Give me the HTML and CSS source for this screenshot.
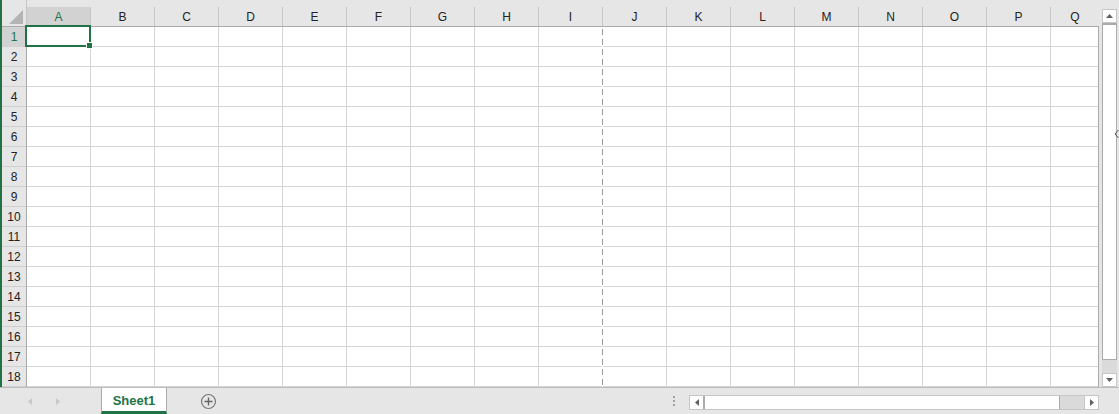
FILE: index.html
```html
<!DOCTYPE html>
<html>
<head>
<meta charset="utf-8">
<link rel="stylesheet" href="styles.css">
</head>
<body>
<div class="workbook">
  <div class="main">
    <div class="sheet">
      <div class="corner">
        <svg class="corner-tri" width="25" height="26" viewBox="0 0 25 26"><polygon points="22,10 22,24 8,24" fill="#b4b4b4"/></svg>
      </div>
      <div class="colheads">
        <div class="ch sel">A</div><div class="ch">B</div><div class="ch">C</div><div class="ch">D</div>
        <div class="ch">E</div><div class="ch">F</div><div class="ch">G</div><div class="ch">H</div>
        <div class="ch">I</div><div class="ch">J</div><div class="ch">K</div><div class="ch">L</div>
        <div class="ch">M</div><div class="ch">N</div><div class="ch">O</div><div class="ch">P</div>
        <div class="ch last">Q</div>
      </div>
      <div class="rowheads">
        <div class="rh sel">1</div><div class="rh">2</div><div class="rh">3</div><div class="rh">4</div>
        <div class="rh">5</div><div class="rh">6</div><div class="rh">7</div><div class="rh">8</div>
        <div class="rh">9</div><div class="rh">10</div><div class="rh">11</div><div class="rh">12</div>
        <div class="rh">13</div><div class="rh">14</div><div class="rh">15</div><div class="rh">16</div>
        <div class="rh">17</div><div class="rh">18</div>
      </div>
      <div class="cells">
        <div class="pagebreak"></div>
        <div class="selection"><div class="handle"></div></div>
      </div>
    </div>
    <div class="vscroll">
      <div class="sb-btn up"><svg width="7" height="4" viewBox="0 0 7 4"><polygon points="3.5,0 7,4 0,4" fill="#606060"/></svg></div>
      <div class="thumb"></div>
      <div class="track"></div>
      <div class="sb-btn down"><svg width="7" height="4" viewBox="0 0 7 4"><polygon points="0,0 7,0 3.5,4" fill="#606060"/></svg></div>
    </div>
  </div>
  <div class="tabbar">
    <div class="nav">
      <svg width="4" height="7" viewBox="0 0 4 7"><polygon points="4,0 4,7 0,3.5" fill="#c8c8c8"/></svg>
      <svg width="4" height="7" viewBox="0 0 4 7"><polygon points="0,0 4,3.5 0,7" fill="#c8c8c8"/></svg>
    </div>
    <div class="tab">Sheet1</div>
    <div class="add">
      <svg width="17" height="17" viewBox="0 0 17 17"><circle cx="8.5" cy="8.5" r="7" fill="none" stroke="#777" stroke-width="1.2"/><path d="M8.5 4.5v8M4.5 8.5h8" stroke="#666" stroke-width="1.4"/></svg>
    </div>
    <div class="spacer"></div>
    <div class="dots"><span></span><span></span><span></span></div>
    <div class="hscroll">
      <div class="hbtn"><svg width="4" height="7" viewBox="0 0 4 7"><polygon points="4,0 4,7 0,3.5" fill="#606060"/></svg></div>
      <div class="hthumb"></div>
      <div class="htrack"></div>
      <div class="hbtn"><svg width="4" height="7" viewBox="0 0 4 7"><polygon points="0,0 4,3.5 0,7" fill="#606060"/></svg></div>
    </div>
  </div>
</div>
<svg class="collapse" width="5" height="10" viewBox="0 0 5 10"><path d="M4.5 1 L1 5 L4.5 9" fill="none" stroke="#555" stroke-width="1"/></svg>
</body>
</html>
```
FILE: styles.css
```css
* { box-sizing: border-box; }
html, body { margin: 0; padding: 0; }
body {
  width: 1119px;
  height: 414px;
  overflow: hidden;
  background: #e6e6e6;
  font-family: "Liberation Sans", Arial, sans-serif;
  position: relative;
}
.workbook { display: flex; flex-direction: column; height: 414px; }
.main { display: flex; height: 387px; }

.sheet {
  display: grid;
  grid-template-columns: 25px 1072px;
  grid-template-rows: 27px 360px;
  border-left: 2px solid #217346;
  width: 1099px;
}
.corner {
  border-right: 1px solid #c6c6c6;
  border-bottom: 1px solid #ababab;
  position: relative;
}
.corner-tri { display: block; margin-left: -1px; }

.colheads {
  display: flex;
  padding-top: 7px;
  border-bottom: 1px solid #ababab;
}
.ch {
  flex: none;
  width: 64px;
  height: 19px;
  border-right: 1px solid #c6c6c6;
  display: flex;
  align-items: center;
  justify-content: center;
  font-size: 12px;
  color: #222;
}
.ch.last { width: 48px; border-right: none; }
.ch.sel { background: #d2d2d2; color: #217346; }

.rowheads {
  display: flex;
  flex-direction: column;
  border-right: 1px solid #ababab;
}
.rh {
  height: 20px;
  flex: none;
  border-bottom: 1px solid #d0d0d0;
  display: flex;
  align-items: center;
  justify-content: center;
  font-size: 12px;
  color: #222;
  padding-top: 1px;
}
.rh.sel { background: #d2d2d2; color: #217346; }

.cells {
  position: relative;
  background-color: #fff;
  background-image:
    linear-gradient(to right, #d4d4d4 1px, transparent 1px),
    linear-gradient(to bottom, #d4d4d4 1px, transparent 1px);
  background-size: 64px 100%, 100% 20px;
  background-position: 63px 0, 0 19px;
  border-right: 1px solid #ababab;
}
.pagebreak {
  position: absolute;
  left: 575px;
  top: 0;
  width: 1px;
  height: 360px;
  background: repeating-linear-gradient(to bottom, #fff 0 2px, #9a9a9a 2px 7px, #fff 7px 12px);
  background-size: 1px 10px;
  background-position: 0 2px;
  background-image: repeating-linear-gradient(to bottom, #9a9a9a 0 6px, #fff 6px 10px);
}
.selection {
  position: absolute;
  left: -2px;
  top: -2px;
  width: 66px;
  height: 22px;
  border: 2px solid #217346;
}
.handle {
  position: absolute;
  right: -4px;
  bottom: -4px;
  width: 7px;
  height: 7px;
  background: #217346;
  border: 1px solid #fff;
}

.vscroll {
  width: 20px;
  display: flex;
  flex-direction: column;
  padding: 9px 2px 0 3px;
}
.sb-btn {
  flex: none;
  height: 14px;
  background: #fff;
  border: 1px solid #c6c6c6;
  display: flex;
  align-items: center;
  justify-content: center;
}
.sb-btn svg { display: block; }
.thumb {
  flex: none;
  height: 337px;
  background: #fff;
  border: 1px solid #ababab;
  border-top-width: 2px;
}
.track { flex: 1; background: #dadada; }

.tabbar {
  display: flex;
  height: 27px;
  border-top: 1px solid #bdbdbd;
}
.nav {
  width: 101px;
  flex: none;
  display: flex;
  align-items: center;
  padding-left: 28px;
  gap: 24px;
}
.nav svg { display: block; }
.tab {
  flex: none;
  width: 66px;
  background: #fff;
  border-left: 1px solid #ababab;
  border-right: 1px solid #ababab;
  border-bottom: 3px solid #217346;
  display: flex;
  align-items: center;
  justify-content: center;
  padding-top: 1px;
  font-weight: bold;
  font-size: 13px;
  color: #217346;
}
.add {
  flex: none;
  margin-left: 33px;
  display: flex;
  align-items: center;
}
.add svg { display: block; }
.spacer { flex: 1; }
.dots {
  flex: none;
  width: 3px;
  margin-right: 14px;
  display: flex;
  flex-direction: column;
  justify-content: center;
  align-items: center;
  gap: 2px;
}
.dots span { width: 2px; height: 2px; background: #a0a0a0; }
.hscroll {
  flex: none;
  width: 410px;
  height: 15px;
  margin-top: 7px;
  margin-right: 20px;
  display: flex;
  border: 1px solid #c6c6c6;
  background: #fff;
}
.hbtn {
  flex: none;
  width: 13px;
  display: flex;
  align-items: center;
  justify-content: center;
  background: #fff;
}
.hbtn svg { display: block; }
.hthumb {
  flex: none;
  width: 357px;
  background: #fff;
  border-left: 2px solid #ababab;
  border-right: 1px solid #ababab;
}
.htrack { flex: 1; background: #dadada; border-right: 1px solid #c6c6c6; }

.collapse {
  position: absolute;
  left: 1114px;
  top: 129px;
  display: block;
}
```
